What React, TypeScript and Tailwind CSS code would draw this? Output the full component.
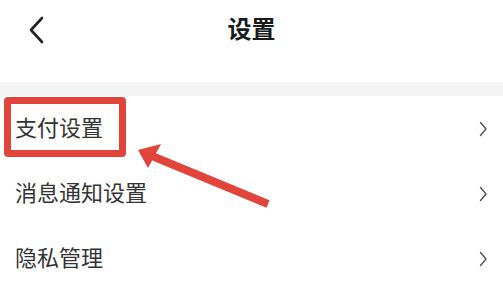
const font = { fontFamily: '"Noto Sans CJK SC", "Noto Sans", sans-serif' }

const items = ["支付设置", "消息通知设置", "隐私管理"]

function Chevron() {
  return (
    <svg width="10" height="16" viewBox="0 0 10 16" fill="none" className="shrink-0">
      <path d="M2.5 1.5 L8 8 L2.5 14.5" stroke="#555" strokeWidth="1.4" strokeLinecap="round" strokeLinejoin="round" />
    </svg>
  )
}

export default function App() {
  return (
    <div className="relative w-[503px] h-[298px] overflow-hidden bg-white" style={font}>
      {/* header */}
      <div className="h-[82px]">
        <div className="relative flex h-[58px] items-center justify-center">
          <svg width="16" height="28" viewBox="0 0 16 28" fill="none" className="absolute left-[28px] top-[16px]">
            <path d="M14 2 L3 14 L14 26" stroke="#222" strokeWidth="2.6" strokeLinecap="round" strokeLinejoin="round" />
          </svg>
          <h1 className="text-[24px] font-bold text-[#1a1a1a] pb-[2px]">设置</h1>
        </div>
      </div>
      <div className="h-[14px] bg-[#f4f4f4]" />

      {/* list */}
      <div className="flex flex-col">
        {items.map((t) => (
          <div key={t} className="flex h-[65px] items-center justify-between pl-[15px] pr-[15px]">
            <span className="text-[22px] text-[#333] pb-[5px]">{t}</span>
            <Chevron />
          </div>
        ))}
      </div>

      {/* annotation box */}
      <div className="absolute left-[4px] top-[97px] w-[122px] h-[60px] rounded-[4px] border-[7px] border-[#e0443a]" />

      {/* annotation arrow */}
      <svg width="503" height="298" className="absolute left-0 top-0 pointer-events-none">
        <line x1="152" y1="156" x2="268" y2="204" stroke="#e0443a" strokeWidth="8" />
        <polygon points="138,150 161,144 148,168" fill="#e0443a" />
      </svg>
    </div>
  )
}
